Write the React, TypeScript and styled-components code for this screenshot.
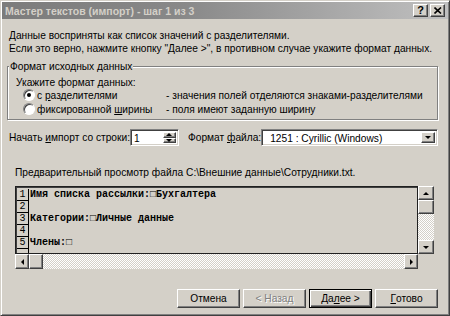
import React from "react";
import styled, { createGlobalStyle, css } from "styled-components";

const face = "#d4d0c8";
const shadow = "#808080";
const dark = "#404040";

const GlobalStyle = createGlobalStyle`
  html, body {
    margin: 0;
    padding: 0;
    background: ${face};
  }
  body {
    font-family: "Liberation Sans", Arial, sans-serif;
    font-size: 10.2px;
    color: #000;
  }
`;

const raised = css`
  background: ${face};
  border: 1px solid;
  border-color: #fff ${dark} ${dark} #fff;
  box-shadow: inset -1px -1px 0 ${shadow};
`;

const sunken = css`
  border: 1px solid;
  border-color: ${shadow} #fff #fff ${shadow};
  box-shadow: inset 1px 1px 0 ${dark}, inset -1px -1px 0 ${face};
`;

const dither = css`
  background: repeating-conic-gradient(#fff 0 25%, ${face} 0 50%) 0 0 / 2px 2px;
`;

const Window = styled.div`
  width: 450px;
  height: 316px;
  box-sizing: border-box;
  border: 1px solid;
  border-color: ${face} ${dark} ${dark} ${face};
  box-shadow: inset 1px 1px 0 #fff, inset -1px -1px 0 ${shadow};
  padding: 1px;
  display: flex;
  flex-direction: column;
  background: ${face};
`;

const TitleBar = styled.div`
  flex: 0 0 17px;
  display: flex;
  align-items: center;
  justify-content: space-between;
  padding: 0 3px 0 3px;
  background: linear-gradient(to right, #7c7c7c 0%, #888 40%, #c0c0c0 100%);
`;

const Title = styled.span`
  font-weight: bold;
  font-size: 10.5px;
  color: ${face};
  white-space: nowrap;
`;

const CaptionButtons = styled.div`
  display: flex;
  gap: 2px;
`;

const CaptionButton = styled.div`
  width: 15px;
  height: 13px;
  box-sizing: border-box;
  ${raised};
  display: flex;
  align-items: center;
  justify-content: center;
  font-weight: bold;
  font-size: 11px;
  line-height: 1;
`;

const Body = styled.div`
  flex: 1;
  display: flex;
  flex-direction: column;
  padding: 10px 10px 6px 5px;
`;

const Intro = styled.div`
  padding-left: 2px;
  line-height: 13px;
`;

const GroupBox = styled.fieldset`
  margin: 5px 0 0 0;
  padding: 4px 8px 3px 8px;
  border: 1px solid ${shadow};
  box-shadow: 1px 1px 0 #fff, inset 1px 1px 0 #fff;
  min-width: 0;
`;

const Legend = styled.legend`
  padding: 0 1px;
  margin-left: -7px;
  line-height: 13px;
  background: ${face};
`;

const Prompt = styled.div`
  line-height: 11px;
`;

const Options = styled.div`
  display: grid;
  grid-template-columns: 143px auto;
  grid-auto-rows: 14px;
  align-items: center;
  padding-left: 7px;
`;

const OptionLabel = styled.label`
  display: flex;
  align-items: center;
  gap: 2px;
`;

const Radio = styled.span<{ $checked?: boolean }>`
  width: 12px;
  height: 12px;
  box-sizing: border-box;
  border-radius: 50%;
  border: 1px solid;
  border-color: ${shadow} #fff #fff ${shadow};
  box-shadow: inset 1px 1px 0 ${dark};
  background: #fff;
  display: flex;
  align-items: center;
  justify-content: center;
  &::after {
    content: "";
    width: 4px;
    height: 4px;
    border-radius: 50%;
    background: ${(p) => (p.$checked ? "#000" : "transparent")};
  }
`;

const U = styled.span`
  text-decoration: underline;
`;

const ImportRow = styled.div`
  display: flex;
  align-items: center;
  margin-top: 9px;
  height: 17px;
`;

const FieldLabel = styled.span<{ $width: number; $gap?: number }>`
  flex: 0 0 ${(p) => p.$width}px;
  white-space: nowrap;
  padding-left: ${(p) => p.$gap ?? 2}px;
  box-sizing: border-box;
`;

const Spin = styled.div`
  width: 49px;
  height: 17px;
  box-sizing: border-box;
  ${sunken};
  background: #fff;
  display: flex;
  padding: 2px;
`;

const SpinValue = styled.span`
  flex: 1;
  padding-left: 1px;
  line-height: 13px;
`;

const SpinButtons = styled.div`
  display: flex;
  flex-direction: column;
  width: 13px;
`;

const SpinButton = styled.div`
  flex: 1;
  box-sizing: border-box;
  ${raised};
  display: flex;
  align-items: center;
  justify-content: center;
`;

const Arrow = styled.span<{ $dir: "up" | "down" | "left" | "right"; $size?: number }>`
  width: 0;
  height: 0;
  border: ${(p) => p.$size ?? 3}px solid transparent;
  ${(p) =>
    p.$dir === "up"
      ? css`border-bottom-color: #000; border-top-width: 0;`
      : p.$dir === "down"
      ? css`border-top-color: #000; border-bottom-width: 0;`
      : p.$dir === "left"
      ? css`border-right-color: #000; border-left-width: 0;`
      : css`border-left-color: #000; border-right-width: 0;`}
`;

const Combo = styled.div`
  flex: 1;
  height: 17px;
  box-sizing: border-box;
  ${sunken};
  background: #fff;
  display: flex;
  padding: 2px;
`;

const ComboValue = styled.span`
  flex: 1;
  padding-left: 6px;
  line-height: 13px;
`;

const ComboButton = styled.div`
  width: 14px;
  box-sizing: border-box;
  ${raised};
  display: flex;
  align-items: center;
  justify-content: center;
`;

const PreviewCaption = styled.div`
  margin: 20px 0 0 8px;
  line-height: 13px;
`;

const Preview = styled.div`
  margin: 7px 4px 0 8px;
  display: grid;
  grid-template-columns: 1fr 16px;
  grid-template-rows: 68px 15px;
`;

const PreviewBox = styled.div`
  box-sizing: border-box;
  border: 1px solid #202020;
  box-shadow: inset 1px 1px 0 ${dark};
  padding: 2px 0 0 1px;
  display: flex;
  overflow: hidden;
  font-family: "Liberation Mono", "Courier New", monospace;
  font-size: 10px;
  font-weight: bold;
`;

const Numbers = styled.div`
  width: 11px;
  border-right: 1px solid #000;
  flex: 0 0 auto;
`;

const NumberCell = styled.div`
  height: 11px;
  border-bottom: 1px solid #000;
  line-height: 11px;
  text-align: center;
  font-weight: normal;
`;

const Lines = styled.div`
  flex: 1;
  padding-left: 1px;
`;

const Line = styled.div`
  height: 12px;
  line-height: 12px;
  white-space: pre;
`;

const VScroll = styled.div`
  display: flex;
  flex-direction: column;
  ${dither};
`;

const HScroll = styled.div`
  display: flex;
  ${dither};
`;

const ScrollButton = styled.div`
  box-sizing: border-box;
  ${raised};
  display: flex;
  align-items: center;
  justify-content: center;
  flex: 0 0 14px;
`;

const Track = styled.div`
  flex: 1;
`;

const Footer = styled.div`
  margin-top: auto;
  display: flex;
  justify-content: flex-end;
  gap: 3px;
`;

const Button = styled.div<{ $default?: boolean; $disabled?: boolean }>`
  width: 63px;
  height: 19px;
  box-sizing: border-box;
  ${raised};
  display: flex;
  align-items: center;
  justify-content: center;
  color: ${(p) => (p.$disabled ? shadow : "#000")};
  text-shadow: ${(p) => (p.$disabled ? "1px 1px 0 #fff" : "none")};
  ${(p) =>
    p.$default &&
    css`
      border: 1px solid #000;
      box-shadow: inset 1px 1px 0 #fff, inset -1px -1px 0 ${dark}, inset -2px -2px 0 ${shadow};
    `}
`;

const previewLines = [
  "Имя списка рассылки:□Бухгалтера",
  "",
  "Категории:□Личные данные",
  "",
  "Члены:□",
];

export default function App() {
  return (
    <>
      <GlobalStyle />
      <Window>
        <TitleBar>
          <Title>Мастер текстов (импорт) - шаг 1 из 3</Title>
          <CaptionButtons>
            <CaptionButton>?</CaptionButton>
            <CaptionButton>
              <svg width="8" height="7" viewBox="0 0 8 7">
                <path d="M0.5 0.5 L7 6.5 M7 0.5 L0.5 6.5" stroke="#000" strokeWidth="1.6" />
              </svg>
            </CaptionButton>
          </CaptionButtons>
        </TitleBar>
        <Body>
          <Intro>
            <div>Данные восприняты как список значений с разделителями.</div>
            <div>Если это верно, нажмите кнопку "Далее &gt;", в противном случае укажите формат данных.</div>
          </Intro>
          <GroupBox>
            <Legend>Формат исходных данных</Legend>
            <Prompt>Укажите формат данных:</Prompt>
            <Options>
              <OptionLabel>
                <Radio $checked />
                <span>
                  с <U>р</U>азделителями
                </span>
              </OptionLabel>
              <span>- значения полей отделяются знаками-разделителями</span>
              <OptionLabel>
                <Radio />
                <span>
                  фиксированной <U>ш</U>ирины
                </span>
              </OptionLabel>
              <span>- поля имеют заданную ширину</span>
            </Options>
          </GroupBox>
          <ImportRow>
            <FieldLabel $width={118}>
              Начать <U>и</U>мпорт со строки:
            </FieldLabel>
            <Spin>
              <SpinValue>1</SpinValue>
              <SpinButtons>
                <SpinButton>
                  <Arrow $dir="up" $size={3} />
                </SpinButton>
                <SpinButton>
                  <Arrow $dir="down" $size={3} />
                </SpinButton>
              </SpinButtons>
            </Spin>
            <FieldLabel $width={78} $gap={9}>
              Формат <U>ф</U>айла:
            </FieldLabel>
            <Combo>
              <ComboValue>1251 : Cyrillic (Windows)</ComboValue>
              <ComboButton>
                <Arrow $dir="down" $size={3} />
              </ComboButton>
            </Combo>
          </ImportRow>
          <PreviewCaption>Предварительный просмотр файла C:\Внешние данные\Сотрудники.txt.</PreviewCaption>
          <Preview>
            <PreviewBox>
              <Numbers>
                {previewLines.map((_, i) => (
                  <NumberCell key={i}>{i + 1}</NumberCell>
                ))}
              </Numbers>
              <Lines>
                {previewLines.map((l, i) => (
                  <Line key={i}>{l}</Line>
                ))}
              </Lines>
            </PreviewBox>
            <VScroll>
              <ScrollButton>
                <Arrow $dir="up" $size={3} />
              </ScrollButton>
              <ScrollButton />
              <Track />
              <ScrollButton>
                <Arrow $dir="down" $size={3} />
              </ScrollButton>
            </VScroll>
            <HScroll>
              <ScrollButton>
                <Arrow $dir="left" $size={3} />
              </ScrollButton>
              <ScrollButton />
              <Track />
              <ScrollButton>
                <Arrow $dir="right" $size={3} />
              </ScrollButton>
            </HScroll>
          </Preview>
          <Footer>
            <Button>Отмена</Button>
            <Button $disabled>&lt; Назад</Button>
            <Button $default>
              Да<U>л</U>ее &gt;
            </Button>
            <Button>
              <U>Г</U>отово
            </Button>
          </Footer>
        </Body>
      </Window>
    </>
  );
}
